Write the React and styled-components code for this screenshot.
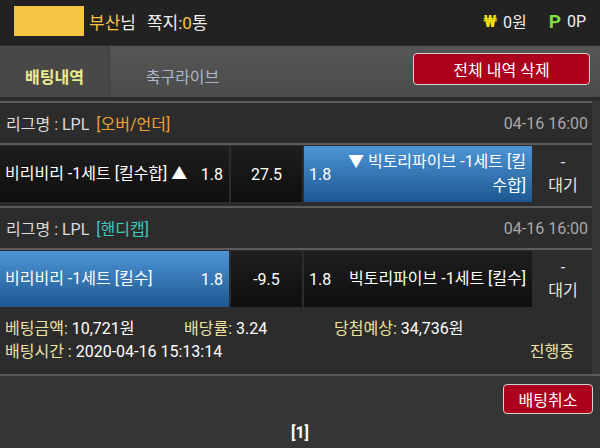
import React from 'react'
import styled, { createGlobalStyle } from 'styled-components'

const GlobalStyle = createGlobalStyle`
    html, body {
        margin: 0;
        padding: 0;
        background: #363636;
        font-family: Roboto, "Noto Sans CJK KR", sans-serif;
        color: #e6e6e6;
    }
    * { box-sizing: border-box; }
`;

const bets = [
    {
        id: 1,
        league: 'LPL',
        type: '[오버/언더]',
        typeColor: '#f0a033',
        date: '04-16 16:00',
        home: '비리비리 -1세트 [킬수합] ▲',
        homeOdds: '1.8',
        line: '27.5',
        away: '▼ 빅토리파이브 -1세트 [킬수합]',
        awayOdds: '1.8',
        picked: 'away',
    },
    {
        id: 2,
        league: 'LPL',
        type: '[핸디캡]',
        typeColor: '#3fc6bd',
        date: '04-16 16:00',
        home: '비리비리 -1세트 [킬수]',
        homeOdds: '1.8',
        line: '-9.5',
        away: '빅토리파이브 -1세트 [킬수]',
        awayOdds: '1.8',
        picked: 'home',
    },
]

function App() {
    return (
        <Page>
            <GlobalStyle />
            <Header>
                <UserBox />
                <HeaderText>
                    <Gold>부산</Gold>님<Spacer />쪽지:<Gold>0</Gold>통
                </HeaderText>
                <Wallet>
                    <Won>₩</Won>
                    <span>0원</span>
                    <Point>P</Point>
                    <span>0P</span>
                </Wallet>
            </Header>
            <TabBar>
                <Tab $active>배팅내역</Tab>
                <Tab>축구라이브</Tab>
                <RedButton $wide>전체 내역 삭제</RedButton>
            </TabBar>
            <List>
                {bets.map((bet) => (
                    <Bet key={bet.id}>
                        <LeagueRow>
                            <span>
                                리그명 : {bet.league} <TypeTag style={{ color: bet.typeColor }}>{bet.type}</TypeTag>
                            </span>
                            <DateText>{bet.date}</DateText>
                        </LeagueRow>
                        <MatchRow>
                            <Cell $picked={bet.picked === 'home'}>
                                <TeamName>{bet.home}</TeamName>
                                <Odds>{bet.homeOdds}</Odds>
                            </Cell>
                            <LineCell>{bet.line}</LineCell>
                            <Cell $picked={bet.picked === 'away'}>
                                <Odds>{bet.awayOdds}</Odds>
                                <TeamName $right>{bet.away}</TeamName>
                            </Cell>
                            <Status>
                                <span>-</span>
                                <span>대기</span>
                            </Status>
                        </MatchRow>
                    </Bet>
                ))}
                <Info>
                    <InfoLine>
                        <InfoItem $w="179px"><Label>베팅금액:</Label> 10,721원</InfoItem>
                        <InfoItem $w="150px"><Label>배당률:</Label> 3.24</InfoItem>
                        <InfoItem><Label>당첨예상:</Label> 34,736원</InfoItem>
                    </InfoLine>
                    <InfoLine $between>
                        <InfoItem><Label>배팅시간 :</Label> 2020-04-16 15:13:14</InfoItem>
                        <Label>진행중</Label>
                    </InfoLine>
                </Info>
            </List>
            <Footer>
                <RedButton>배팅취소</RedButton>
            </Footer>
            <Pager>[1]</Pager>
        </Page>
    )
}

const Page = styled.div`
    width: 600px;
    min-height: 448px;
    background: #363636;
`;

const Header = styled.div`
    height: 46px;
    display: flex;
    align-items: center;
    padding: 0 14px 3px;
    background: #222222;
    border-bottom: 1px solid #2e2e2e;
`;

const UserBox = styled.div`
    width: 70px;
    height: 30px;
    background: #f6c443;
    margin-right: 5px;
`;

const HeaderText = styled.div`
    font-size: 17px;
    color: #eeeeee;
`;

const Gold = styled.span`
    color: #f6c443;
`;

const Spacer = styled.span`
    display: inline-block;
    width: 11px;
`;

const Wallet = styled.div`
    margin-left: auto;
    display: flex;
    align-items: center;
    gap: 6px;
    font-size: 16px;
    color: #eeeeee;
    span + b { margin-left: 16px; }
`;

const Won = styled.b`
    color: #f2e20a;
    font-size: 17px;
`;

const Point = styled.b`
    color: #7fdc3e;
    font-size: 19px;
`;

const TabBar = styled.div`
    height: 55px;
    display: flex;
    align-items: stretch;
    padding-right: 10px;
    background: linear-gradient(#565656, #4b4b4b);
    border-bottom: 4px solid #2a2a2a;
`;

const Tab = styled.div`
    width: ${(p) => (p.$active ? '110px' : '145px')};
    display: flex;
    align-items: flex-end;
    justify-content: center;
    padding-bottom: 9px;
    font-size: 16px;
    font-weight: ${(p) => (p.$active ? 700 : 400)};
    color: ${(p) => (p.$active ? '#ecec8e' : '#a9b9c9')};
    background: ${(p) => (p.$active ? '#484848' : 'transparent')};
    border-right: ${(p) => (p.$active ? '1px solid #3c3c3c' : 'none')};
`;

const RedButton = styled.button`
    margin-left: auto;
    align-self: ${(p) => (p.$wide ? 'flex-start' : 'center')};
    margin-top: ${(p) => (p.$wide ? '7px' : '0')};
    width: ${(p) => (p.$wide ? '177px' : '90px')};
    height: ${(p) => (p.$wide ? '32px' : '30px')};
    background: #ad001d;
    color: #ffffff;
    border: 1px solid #d2d2d2;
    border-radius: 4px;
    font-family: inherit;
    font-size: 16px;
    padding: 0;
`;

const List = styled.div`
    width: 592px;
    background: #2c2c2c;
`;

const Bet = styled.div`
    border-top: 2px solid #5c5c5c;
`;

const LeagueRow = styled.div`
    height: 42px;
    display: flex;
    align-items: center;
    justify-content: space-between;
    padding: 0 4px 0 6px;
    font-size: 16px;
    color: #dddddd;
    border-bottom: 2px solid #5c5c5c;
`;

const TypeTag = styled.span`
    margin-left: 3px;
`;

const DateText = styled.span`
    color: #a8a8a8;
`;

const MatchRow = styled.div`
    display: grid;
    grid-template-columns: 229px 71px 228px 1fr;
    gap: 2px;
    min-height: 61px;
    padding: 1px 0 4px;
    background: #2c2c2c;
`;

const Cell = styled.div`
    display: flex;
    align-items: center;
    justify-content: space-between;
    gap: 10px;
    padding: 4px 6px 4px 5px;
    font-size: 16px;
    color: #ffffff;
    background: ${(p) =>
        p.$picked
            ? 'linear-gradient(#4d95d6, #1d5891)'
            : 'linear-gradient(#1e1e1e, #0e0e0e)'};
`;

const TeamName = styled.span`
    line-height: 24px;
    text-align: ${(p) => (p.$right ? 'right' : 'left')};
`;

const Odds = styled.span`
    flex-shrink: 0;
`;

const LineCell = styled.div`
    display: flex;
    align-items: center;
    justify-content: center;
    font-size: 16px;
    color: #ffffff;
    background: linear-gradient(#1e1e1e, #0e0e0e);
`;

const Status = styled.div`
    display: flex;
    flex-direction: column;
    align-items: center;
    justify-content: center;
    padding: 4px 0;
    line-height: 23px;
    font-size: 16px;
    color: #e6e6e6;
`;

const Info = styled.div`
    padding: 6px 18px 11px 5px;
    font-size: 16px;
    color: #ffffff;
    line-height: 23px;
`;

const InfoLine = styled.div`
    display: flex;
    justify-content: ${(p) => (p.$between ? 'space-between' : 'flex-start')};
`;

const InfoItem = styled.div`
    width: ${(p) => p.$w || 'auto'};
`;

const Label = styled.span`
    color: #e9e2a4;
`;

const Footer = styled.div`
    display: flex;
    padding: 8px 7px 0 0;
    border-top: 2px solid #5a5a5a;
`;

const Pager = styled.div`
    text-align: center;
    font-size: 16px;
    font-weight: 700;
    color: #ffffff;
    padding-top: 9px;
`;

export default App
